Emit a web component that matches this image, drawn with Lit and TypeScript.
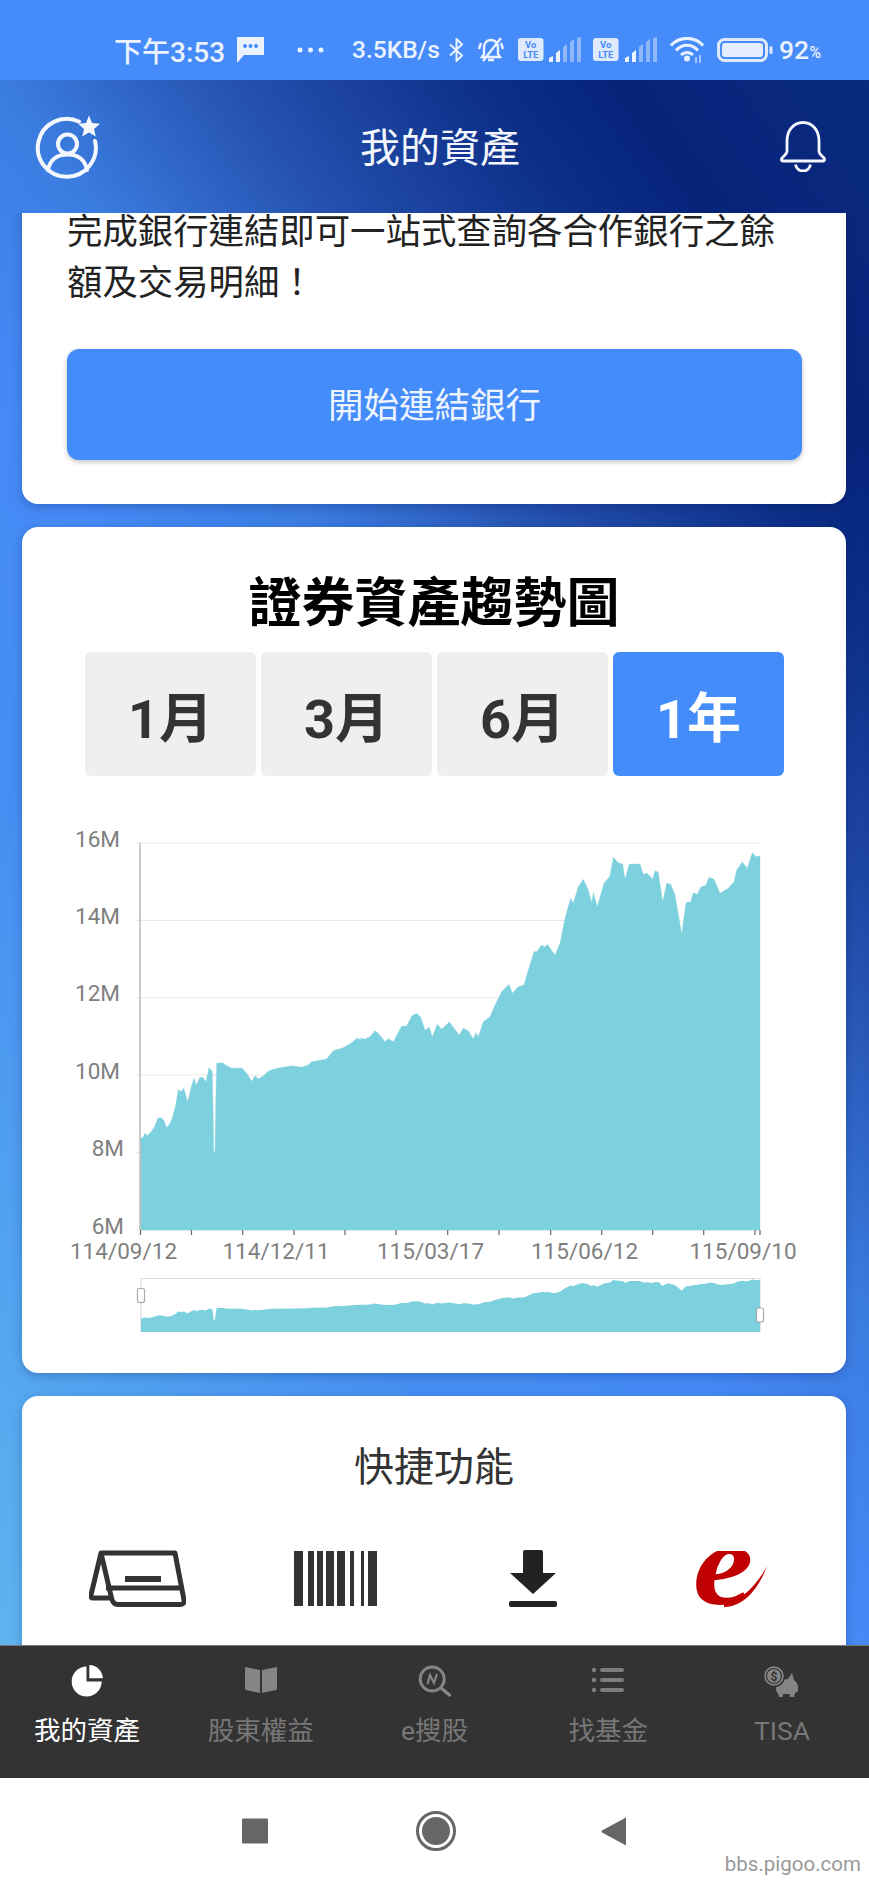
import { LitElement, html, svg, css } from "lit";
import { customElement } from "lit/decorators.js";

// Outline of the area chart, traced as [x, y] in three crops of the plot.
const seg = (ox: number, oy: number, p: number[]) => {
  const out: [number, number][] = [];
  for (let i = 0; i < p.length; i += 2) out.push([ox + p[i] / 3, oy + p[i + 1] / 3]);
  return out;
};
const outline: [number, number][] = [
  ...seg(135, 1020, [16,352,22,355,30,340,38,347,48,335,58,322,68,295,78,293,86,300,95,323,105,310,112,295,122,255,130,208,137,215,146,205,158,245,170,195,177,175,184,195,195,172,205,173,213,185,222,142,232,155,235,300,236,395,240,395,242,250,245,130,262,128,275,137,290,145,320,144,335,160,350,184,360,167,370,177,385,168,400,153,420,146,470,137,500,142,520,135,530,125,575,117,595,92,625,83,650,68,665,55,680,60]),
  ...seg(360, 940, [0,295,15,297,30,290,45,272,55,280,75,305,85,296,100,305,125,258,140,258,155,228,170,220,182,232,195,270,208,262,217,290,232,253,245,268,268,246,290,275,298,285,310,265,325,272,340,297,348,278,355,290,370,245,390,230,405,195,425,155,447,133,457,160,475,140,492,135,505,90,522,35,530,35,545,15,555,22,562,13,585,45]),
  ...seg(560, 840, [0,310,15,235,32,175,40,190,55,140,70,118,85,150,95,188,100,158,112,200,132,130,150,108,160,52,175,68,188,72,195,118,208,72,225,72,240,72,250,103,262,100,278,118,285,92,295,97,308,185,320,130,332,133,345,165,365,282,378,188,392,185,400,158,412,163,422,142,438,135,447,112,462,118,480,160,505,145,522,125,530,90,547,66,562,85,577,38,588,50,600,48]),
];
const toPts = (pts: [number, number][]) => pts.map(([x, y]) => `${x.toFixed(1)},${y.toFixed(1)}`).join(" ");
const mainArea = toPts([[140.5, 1230], [140.5, 1137], ...outline, [760, 1230]]);
const miniY = (y: number) => 1280 + (y - 857) * 0.136;
const miniArea = toPts([[141, 1332], [141, 1318], ...outline.map(([x, y]) => [x, miniY(y)] as [number, number]), [760, 1332]]);

const yLabels = [["16M", 843, 120], ["14M", 920.4, 120], ["12M", 997.6, 120], ["10M", 1075, 120], ["8M", 1152.4, 124], ["6M", 1230, 124]] as const;
const xLabels = [["114/09/12", 123.5], ["114/12/11", 276], ["115/03/17", 430.5], ["115/06/12", 584.5], ["115/09/10", 743]] as const;
const xTicks = [140.5, 191.5, 242.7, 294, 345, 396, 447.7, 499, 550.7, 601.7, 652.7, 703.7, 755, 760];
const bars = [[0,9],[14,20],[23,29],[32,40],[43,51],[56,60],[67,70],[74,83]];

const volte = html`<svg class="g" width="26" height="23" viewBox="0 0 26 23"><rect width="25.5" height="23" rx="3" fill="#dfeafd"/><text class="vo" x="12.8" y="10" text-anchor="middle">Vo</text><text class="vo" x="12.8" y="20" text-anchor="middle">LTE</text></svg>`;
const signal = html`<svg width="33" height="25" viewBox="0 0 33 25"><path d="M0 25V21L4 19V25ZM7 25V16L11 13V25Z" fill="#eef4ff"/><path d="M14 25V10L18 7V25ZM21 25V5L25 2V25ZM28 25V1L32 0V25Z" fill="#8fb8fb"/></svg>`;

@customElement("app-root")
export class AppRoot extends LitElement {
  static styles = css`
    :host { display: flex; flex-direction: column; width: 869px; height: 1883px; position: relative; overflow: hidden; font-family: Roboto, "Noto Sans CJK TC", sans-serif; background: #fff; }
    .status { height: 80px; flex: none; background: #458cfa; color: #eaf2ff; display: flex; align-items: center; padding: 19px 0 0 114px; box-sizing: border-box; font-size: 26.500px; font-weight: 500; }
    .status svg { flex: none; display: block; }
    .speed { font-size: 24.500px; margin-left: 28px; width: 90px; white-space: nowrap; }
    .time { width: 108px; font-size: 28px; white-space: nowrap; }
    .pct { font-size: 16px; margin-top: 6px; }
    .ml5 { margin-left: 5px; } .ml6 { margin-left: 6px; } .ml11 { margin-left: 11px; } .ml12 { margin-left: 12px; }
    .ml13 { margin-left: 13px; } .ml15 { margin-left: 15px; } .ml33 { margin-left: 33px; }
    .vo { font-size: 9.5px; font-weight: 700; fill: #458cfa; }

    .stage { flex: 1; min-height: 0; display: flex; flex-direction: column; background: linear-gradient(55deg, #5db4ee 0%, #468ff2 30%, #4589f5 45%, #3b7ce0 56%, #2450ae 68%, #0d2f88 80%, #06237a 87%, #0a2a80 100%); }
    .header { height: 133px; flex: none; display: grid; grid-template-columns: 1fr auto 1fr; align-items: center; color: #fff; padding-left: 11px; box-sizing: border-box; }
    .header h1 { margin: 4px 0 0; font-size: 40px; font-weight: 400; line-height: 50px; color: #f4f7fd; }
    .hleft { padding-left: 24px; display: flex; }
    .hright { justify-self: end; padding-right: 42px; display: flex; }
    .scroll { flex: 1; min-height: 0; overflow: hidden; padding: 0 23px 0 22px; display: flex; flex-direction: column; gap: 23px; }
    .card { flex: none; background: #fff; border-radius: 16px; box-shadow: 0 3px 10px rgba(0,20,80,.25); }
    .intro { margin-top: -30px; padding: 24px 44px 44px 45px; }
    .intro p { margin: 0 0 41px; font-size: 35.400px; line-height: 50.500px; color: #222; }
    .cta { height: 107px; padding-bottom: 4px; border-radius: 12px; background: #458cfb; color: #eef4ff; font-size: 35.500px; display: flex; align-items: center; justify-content: center; box-shadow: 0 2px 5px rgba(0,0,0,.25); }
    .trend { padding-top: 47px; padding-bottom: 13px; }
    .trend h2 { margin: 0 0 18px; text-align: center; font-size: 53px; line-height: 60px; font-weight: 700; color: #000; }
    .tabs { display: grid; grid-template-columns: repeat(4, 171px); gap: 5px; padding: 0 63px; }
    .tab { height: 124px; border-radius: 6px; background: #efefef; color: #333; font-size: 54px; font-weight: 700; display: flex; align-items: center; justify-content: center; }
    .tab.on { background: #458cfb; color: #fff; }
    .chart { display: block; margin-top: 24px; }
    .ax { font-size: 22.500px; fill: #808080; font-family: Roboto, sans-serif; }
    .quick { padding: 48px 16px 80px; }
    .quick h3 { margin: 0 0 58px; text-align: center; font-weight: 400; font-size: 40px; line-height: 48px; color: #333; }
    .qgrid { display: grid; grid-template-columns: repeat(4, 1fr); align-items: center; justify-items: center; height: 57px; }
    .qgrid svg { display: block; }
    .logo { font-family: "Liberation Serif", serif; font-style: italic; font-weight: 700; font-size: 118px; fill: #c00000; }

    .nav { height: 133px; flex: none; box-sizing: border-box; background: #333; border-top: 1px solid #777; display: grid; grid-template-columns: repeat(5, 1fr); }
    .item { display: flex; flex-direction: column; align-items: center; padding-top: 19px; color: #777; font-size: 26.500px; line-height: 36px; }
    .item.on { color: #fff; }
    .item svg { display: block; margin-bottom: 14px; }
    .sys { height: 105px; flex: none; background: #fff; display: flex; align-items: center; justify-content: center; }
    .sys svg { display: block; }
    .mark { position: absolute; right: 8px; bottom: 7px; font-size: 20.500px; line-height: 24px; color: #999; }
  `;

  private chart() {
    return svg`
      ${yLabels.map(([t, y]) => svg`<line x1="136" x2="760" y1=${y} y2=${y} stroke="#eaeaea" stroke-width="1.2"/>`)}
      <polygon points=${mainArea} fill="#7dd0dd" stroke="#7dd0dd" stroke-width=".3" stroke-linejoin="round"/>
      <line x1="140" x2="140" y1="843" y2="1230" stroke="#bdbdbd" stroke-width="1.6"/>
      ${xTicks.map((x) => svg`<line x1=${x} x2=${x} y1="1230" y2="1235" stroke="#666" stroke-width="1.2"/>`)}
      ${yLabels.map(([t, y, r]) => svg`<text class="ax" x=${r} y=${y + 3.5} text-anchor="end">${t}</text>`)}
      ${xLabels.map(([t, x]) => svg`<text class="ax" x=${x} y="1258.5" text-anchor="middle">${t}</text>`)}
      <path d="M141 1332V1278.5H760V1332" fill="none" stroke="#ddd" stroke-width="1.2"/>
      <polygon points=${miniArea} fill="#7dd0dd"/>
      <rect x="137.5" y="1288.5" width="7" height="14" rx="2" fill="#fff" stroke="#aaa" stroke-width="1.2"/>
      <rect x="756.5" y="1308" width="7" height="14" rx="2" fill="#fff" stroke="#aaa" stroke-width="1.2"/>
    `;
  }

  render() {
    return html`
      <div class="status">
        <span class="time">下午3:53</span>
        <svg class="ml15" width="27" height="25" viewBox="0 0 27 25"><path d="M0 1Q0 0 1 0H26Q27 0 27 1V17Q27 18 26 18H7L1 25H0Z" fill="#eaf2ff"/><circle cx="8" cy="9" r="2" fill="#458cfa"/><circle cx="13.5" cy="9" r="2" fill="#458cfa"/><circle cx="19" cy="9" r="2" fill="#458cfa"/></svg>
        <svg class="ml33" width="27" height="6" viewBox="0 0 27 6"><circle cx="3" cy="3" r="2.5" fill="#eaf2ff"/><circle cx="13.5" cy="3" r="2.5" fill="#eaf2ff"/><circle cx="24" cy="3" r="2.5" fill="#eaf2ff"/></svg>
        <span class="speed">3.5KB/s</span>
        <svg class="ml6" width="17" height="24" viewBox="0 0 17 24"><path d="M2 6.5L14 17.5L8.5 23V1L14 6.5L2 17.5" fill="none" stroke="#eaf2ff" stroke-width="2"/></svg>
        <svg class="ml12" width="28" height="26" viewBox="0 0 28 26"><path d="M14 3C9 3 7 7 7 11V17L5 20H23L21 17V11C21 7 19 3 14 3ZM11 23H17M4 6L2 12M24 6L26 12M6 24L24 1" fill="none" stroke="#eaf2ff" stroke-width="2.4"/></svg>
        <span class="ml13">${volte}</span>
        <span class="ml5">${signal}</span>
        <span class="ml11">${volte}</span>
        <span class="ml6">${signal}</span>
        <svg class="ml12" width="34" height="26" viewBox="0 0 34 26"><path d="M1 8.5C9-1 25-1 33 8.5M6 13.5C12 6.5 22 6.5 28 13.5M11 18C14.5 14.5 19.500 14.500 23 18" fill="none" stroke="#eaf2ff" stroke-width="3"/><circle cx="17" cy="21.500" r="3" fill="#eaf2ff"/><path d="M26 20V26M30 18V26" stroke="#b9d3fd" stroke-width="1.600"/></svg>
        <svg class="ml13" width="56" height="24" viewBox="0 0 56 24"><rect x="1.500" y="1.500" width="48" height="21" rx="6" fill="none" stroke="#dfeafd" stroke-width="3"/><rect x="5" y="5" width="41" height="14" rx="3" fill="#e3edfd"/><rect x="52.500" y="8" width="3" height="8" rx="1.500" fill="#dfeafd"/></svg>
        <span class="ml6">92</span><span class="pct">%</span>
      </div>

      <div class="stage">
        <header class="header">
          <div class="hleft">
            <svg width="66" height="66" viewBox="0 0 66 66"><g fill="none" stroke="#f4f7fd" stroke-width="4" stroke-linecap="round"><path d="M44 7.500A29 29 0 1 0 60 27"/><circle cx="32.500" cy="30" r="9.500"/><path d="M13 56C15 45 23 40.500 32.500 40.500S50 45 52 56"/></g><path d="M54 1.500L57 9L65 9.800L59 15L60.800 22.500L54 18.500L47.200 22.500L49 15L43 9.800L51 9Z" fill="#f4f7fd"/></svg>
          </div>
          <h1>我的資產</h1>
          <div class="hright">
            <svg width="48" height="51" viewBox="0 0 48 51"><path d="M24 1.500C14 1.500 8 10 8 20V30C8 33 5 35 3 37Q1.500 40 4 40H44Q46.500 40 45 37C43 35 40 33 40 30V20C40 10 34 1.500 24 1.500Z" fill="none" stroke="#f4f7fd" stroke-width="2.800"/><path d="M16.500 43.500Q18 50 24 50T31.500 43.500" fill="none" stroke="#f4f7fd" stroke-width="2.800"/></svg>
          </div>
        </header>

        <div class="scroll">
          <section class="card intro">
            <p>完成銀行連結即可一站式查詢各合作銀行之餘額及交易明細！</p>
            <div class="cta">開始連結銀行</div>
          </section>

          <section class="card trend">
            <h2>證券資產趨勢圖</h2>
            <div class="tabs">
              <div class="tab">1月</div><div class="tab">3月</div><div class="tab">6月</div><div class="tab on">1年</div>
            </div>
            <svg class="chart" width="824" height="560" viewBox="22 800 824 560">${this.chart()}</svg>
          </section>

          <section class="card quick">
            <h3>快捷功能</h3>
            <div class="qgrid">
              <svg width="97" height="57" viewBox="0 0 97 57"><path d="M12 3H86L95 50Q95.500 54.500 91 54.500H29Q24 54.500 22.500 48H4Q1.500 48 2 45ZM12 3L22.500 48M17 38H93" fill="none" stroke="#333" stroke-width="5" stroke-linejoin="round"/><rect x="36" y="26" width="36" height="6" fill="#333"/></svg>
              <svg width="83" height="55" viewBox="0 0 83 55">${bars.map(([a, b]) => svg`<rect x=${a} y="0" width=${b - a} height="55" fill="#333"/>`)}</svg>
              <svg width="48" height="57" viewBox="0 0 48 57"><path d="M14 2Q14 0 16 0H32Q34 0 34 2V23H47L24 44L1 23H14Z" fill="#222"/><rect x="0" y="51" width="48" height="6" rx="2" fill="#222"/></svg>
              <svg width="74" height="56" viewBox="0 0 74 56"><text class="logo" transform="translate(-1 53) scale(1.150 1)" x="0" y="0">e</text><path d="M30 52C48 51 64 32 73 15C66 34 52 56 30 56Z" fill="#c00000"/></svg>
            </div>
          </section>
        </div>
      </div>

      <nav class="nav">
        <div class="item on"><svg width="40" height="34" viewBox="0 0 40 34"><path d="M19.500 1.500A15 15 0 1 0 34.700 16.500H19.500Z" fill="#fff"/><path d="M22.300 0A13.500 13.500 0 0 1 35.800 13.300H22.300Z" fill="#fff"/></svg>我的資產</div>
        <div class="item"><svg width="40" height="34" viewBox="0 0 40 34"><path d="M4 2L19 5V28L5 25Q4 24.700 4 23.500ZM36 2L21 5V28L35 25Q36 24.700 36 23.500Z" fill="#858585"/></svg>股東權益</div>
        <div class="item"><svg width="40" height="34" viewBox="0 0 40 34"><circle cx="18.200" cy="14" r="12" fill="none" stroke="#858585" stroke-width="3"/><path d="M27 23L35.500 30" stroke="#858585" stroke-width="3.500" stroke-linecap="round"/><path d="M13.500 19L16 10L20 18L23 9" fill="none" stroke="#858585" stroke-width="2.200"/></svg>e搜股</div>
        <div class="item"><svg width="40" height="34" viewBox="0 0 40 34"><g fill="#7d7d7d"><circle cx="6" cy="5" r="2.200"/><circle cx="6" cy="15" r="2.200"/><circle cx="6" cy="25" r="2.200"/></g><path d="M14 5H34M14 15H34M14 25H34" stroke="#7d7d7d" stroke-width="4" stroke-linecap="round"/></svg>找基金</div>
        <div class="item"><svg width="40" height="34" viewBox="0 0 40 34"><path d="M14 24C14 18 20 14 26 14L30 8L32 15C35 17 36 20 36 22V26L33 28L32 32H28L27.500 29H21L20.500 32H17L16 28Q14 27 14 24Z" fill="#858585"/><circle cx="12" cy="11" r="10.500" fill="#858585" stroke="#333" stroke-width="1.500"/><circle cx="12" cy="11" r="7.500" fill="none" stroke="#333" stroke-width="1.200"/><text x="12" y="15.500" text-anchor="middle" font-size="12" font-weight="700" fill="#333">$</text></svg>TISA</div>
      </nav>

      <div class="sys">
        <svg width="400" height="44" viewBox="0 0 400 44">
          <rect x="7" y="9.500" width="26" height="25" rx="1" fill="#666"/>
          <circle cx="201" cy="22" r="18.500" fill="none" stroke="#666" stroke-width="3"/>
          <circle cx="201" cy="22" r="14" fill="#666"/>
          <path d="M391 8.500V36.500L367 23.500Q366 22.500 367 21.500Z" fill="#666"/>
        </svg>
      </div>
      <div class="mark">bbs.pigoo.com</div>
    `;
  }
}
